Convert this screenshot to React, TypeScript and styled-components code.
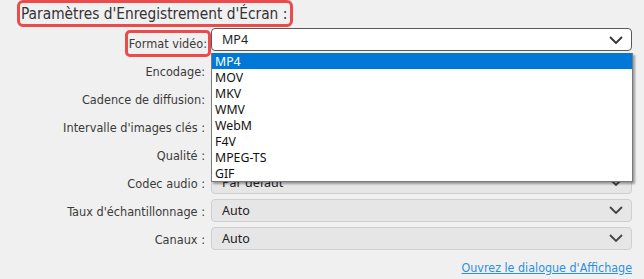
import React from "react";
import styled, { createGlobalStyle } from "styled-components";

const Global = createGlobalStyle`
  html, body { margin: 0; padding: 0; background: #f0f0f0; }
  body { width: 644px; height: 279px; overflow: hidden; }
`;

const Page = styled.div`
  position: relative;
  width: 644px;
  height: 279px;
  background: #f0f0f0;
  font-family: "DejaVu Sans Condensed", "DejaVu Sans", sans-serif;
  font-stretch: condensed;
  color: #3a3a3a;
`;

const TitleBox = styled.div`
  display: inline-block;
  margin-left: 17px;
  border: 3px solid #ec4b4b;
  border-radius: 6px;
  padding: 0 3px 0 1px;
  height: 21px;
  line-height: 22px;
  font-size: 15.3px;
  color: #333;
`;

const Form = styled.div`
  position: relative;
  display: grid;
  grid-template-columns: 205px 421px;
  column-gap: 6px;
  grid-auto-rows: 28px;
  align-items: center;
  margin-top: 1px;
`;

const Label = styled.div`
  text-align: right;
  font-size: 12.6px;
  padding-top: 2px;
`;

const Highlight = styled.span`
  display: inline-block;
  border: 3px solid #ec4b4b;
  border-radius: 5px;
  padding: 0 1px 0 1px;
  height: 21px;
  line-height: 21px;
  margin-right: -6px;
  margin-top: 1px;
`;

const Select = styled.div<{ $active?: boolean }>`
  height: 23px;
  box-sizing: border-box;
  border: 1px solid ${(p) => (p.$active ? "#5a5a5a" : "#cfcfcf")};
  border-radius: 4px;
  background: ${(p) => (p.$active ? "#ffffff" : "#e6e6e6")};
  display: flex;
  align-items: center;
  justify-content: space-between;
  padding: 0 8px 0 10px;
  font-family: "Noto Sans", "Open Sans", sans-serif;
  font-stretch: normal;
  font-size: 12.5px;
  color: #222;
  margin-top: ${(p) => (p.$active ? "-5px" : "0")};
`;

const Chevron = ({ dark }: { dark?: boolean }) => (
  <svg width="14" height="8" viewBox="0 0 14 8">
    <path
      d="M1 1 L7 7 L13 1"
      fill="none"
      stroke={dark ? "#333" : "#444"}
      strokeWidth="1.8"
    />
  </svg>
);

const List = styled.ul`
  position: absolute;
  left: 211px;
  top: 25px;
  width: 420px;
  margin: 0;
  padding: 0;
  list-style: none;
  background: #fff;
  border: 1px solid #7a7a7a;
  border-top: none;
  box-shadow: 2px 2px 2px rgba(0, 0, 0, 0.35);
  font-family: "Noto Sans", "Open Sans", sans-serif;
  font-size: 12.3px;
  color: #111;
  z-index: 2;
`;

const Item = styled.li<{ $selected?: boolean }>`
  height: 16px;
  line-height: 17px;
  padding-left: 3px;
  background: ${(p) => (p.$selected ? "#0078d7" : "transparent")};
  color: ${(p) => (p.$selected ? "#fff" : "#111")};
`;

const Footer = styled.div`
  display: flex;
  justify-content: flex-end;
  padding-right: 12px;
  margin-top: 8px;
`;

const Link = styled.a`
  font-size: 12.4px;
  color: #2e8fe0;
  text-decoration: underline;
  cursor: pointer;
`;

const rows = [
  { label: "Encodage:", value: "" },
  { label: "Cadence de diffusion:", value: "" },
  { label: "Intervalle d'images clés :", value: "" },
  { label: "Qualité :", value: "" },
  { label: "Codec audio :", value: "Par défaut" },
  { label: "Taux d'échantillonnage :", value: "Auto" },
  { label: "Canaux :", value: "Auto" },
];

const formats = ["MP4", "MOV", "MKV", "WMV", "WebM", "F4V", "MPEG-TS", "GIF"];

export default function App() {
  return (
    <Page>
      <Global />
      <TitleBox>Paramètres d'Enregistrement d'Écran :</TitleBox>
      <Form>
        <Label>
          <Highlight>Format vidéo:</Highlight>
        </Label>
        <Select $active>
          <span>MP4</span>
          <Chevron dark />
        </Select>
        {rows.map((r) => (
          <React.Fragment key={r.label}>
            <Label>{r.label}</Label>
            <Select>
              <span>{r.value}</span>
              <Chevron />
            </Select>
          </React.Fragment>
        ))}
        <List>
          {formats.map((f, i) => (
            <Item key={f} $selected={i === 0}>
              {f}
            </Item>
          ))}
        </List>
      </Form>
      <Footer>
        <Link>Ouvrez le dialogue d'Affichage</Link>
      </Footer>
    </Page>
  );
}
